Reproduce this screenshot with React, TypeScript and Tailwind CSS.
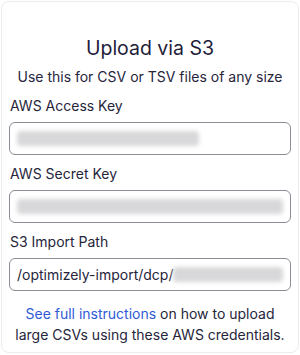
const font = { fontFamily: "Inter, 'Noto Sans', sans-serif" };

function Blur({ w }: { w: string }) {
  return <div className={`h-[15px] ${w} rounded-sm bg-[#d8d8da] blur-[2px]`} />;
}

function Field({ label, children }: { label: string; children: React.ReactNode }) {
  return (
    <div className="flex flex-col">
      <label className="text-[14px] leading-5 text-[#26253b] pl-px">{label}</label>
      <div className="mt-[6px] h-[33px] rounded-md border border-[#8c8c96] flex items-center px-[7px] overflow-hidden">
        {children}
      </div>
    </div>
  );
}

export default function App() {
  return (
    <div className="w-[300px] h-[355px] bg-white p-px" style={font}>
      <div className="h-[352px] w-[298px] rounded-lg border border-[#ececee] px-[7px] pt-[32px] flex flex-col">
        <h2 className="text-center text-[19.5px] leading-7 text-[#1f1d3a]">Upload via S3</h2>
        <p className="mt-[5px] text-center text-[14px] leading-5 text-[#26253b]">
          Use this for CSV or TSV files of any size
        </p>
        <div className="mt-[9px] flex flex-col gap-[9px]">
          <Field label="AWS Access Key">
            <Blur w="w-[182px]" />
          </Field>
          <Field label="AWS Secret Key">
            <Blur w="w-[270px]" />
          </Field>
          <Field label="S3 Import Path">
            <span className="text-[14px] text-[#26253b] whitespace-nowrap">/optimizely-import/dcp/</span>
            <Blur w="w-[114px]" />
          </Field>
        </div>
        <p className="mt-[12px] text-center text-[14px] leading-[21px] text-[#26253b] whitespace-nowrap">
          <a className="text-[#2f5bd8]">See full instructions</a> on how to upload
          <br />
          large CSVs using these AWS credentials.
        </p>
      </div>
    </div>
  );
}
